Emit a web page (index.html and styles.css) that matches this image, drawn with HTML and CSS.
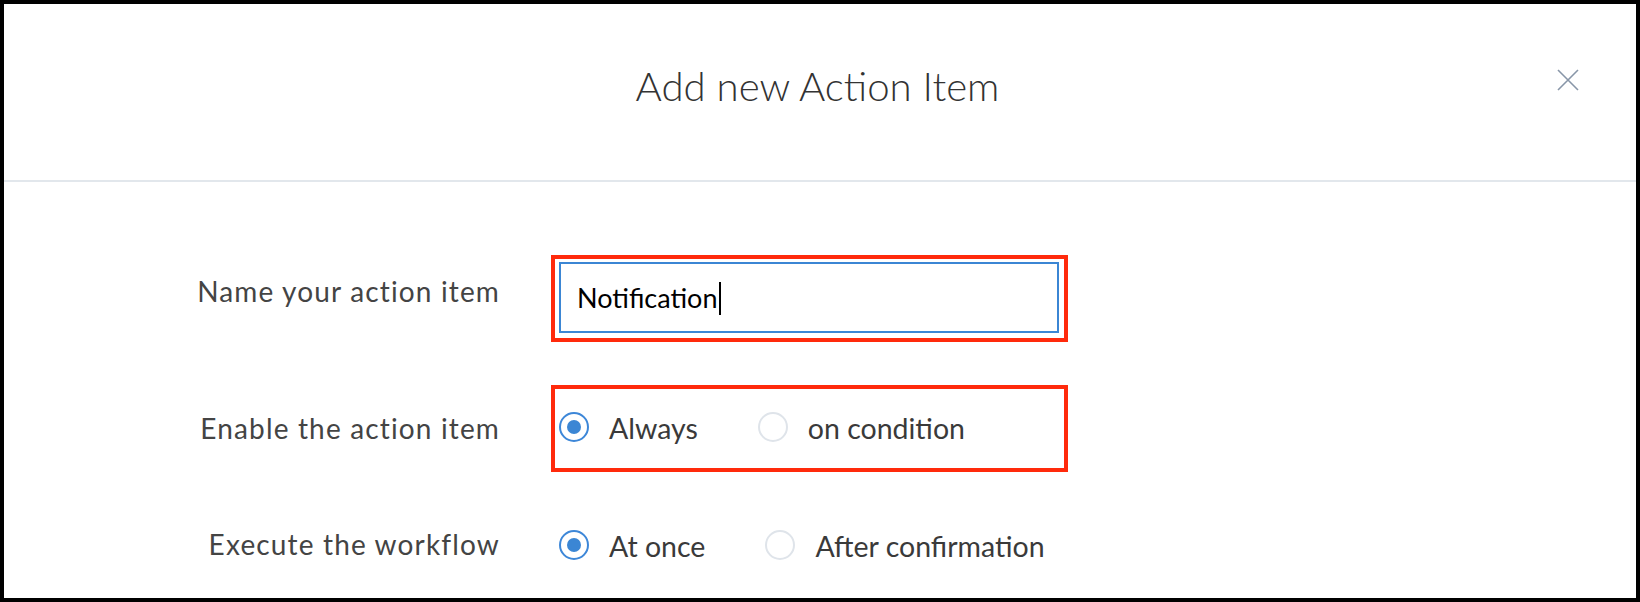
FILE: index.html
```html
<!DOCTYPE html>
<html>
<head>
<meta charset="utf-8">
<link rel="stylesheet" href="styles.css">
</head>
<body>
<div class="modal">
  <div class="header">
    <h1 class="title">Add new Action Item</h1>
    <button class="close" aria-label="Close">
      <svg width="22" height="22" viewBox="0 0 22 22"><path d="M1 1 L21 21 M21 1 L1 21" stroke="#8896a8" stroke-width="1.6" fill="none"/></svg>
    </button>
  </div>
  <div class="form">
    <div class="row row-name">
      <div class="label">Name your action item</div>
      <div class="annot annot-input">
        <div class="text-input">Notification<span class="caret"></span></div>
      </div>
    </div>
    <div class="row row-enable">
      <div class="label">Enable the action item</div>
      <div class="annot radios">
        <label class="opt"><span class="radio checked"></span><span class="opt-text">Always</span></label>
        <label class="opt"><span class="radio"></span><span class="opt-text">on condition</span></label>
      </div>
    </div>
    <div class="row row-exec">
      <div class="label">Execute the workflow</div>
      <div class="plain radios">
        <label class="opt"><span class="radio checked"></span><span class="opt-text">At once</span></label>
        <label class="opt"><span class="radio"></span><span class="opt-text">After confirmation</span></label>
      </div>
    </div>
  </div>
</div>
</body>
</html>
```
FILE: styles.css
```css
* { box-sizing: border-box; }
html, body { margin: 0; padding: 0; background: #fff; }
body { font-family: Lato, "Open Sans", sans-serif; }

.modal {
  width: 1640px;
  height: 602px;
  border: 4px solid #000;
  background: #fff;
  overflow: hidden;
}

.header {
  position: relative;
  height: 178px;
  border-bottom: 2px solid #e2e7ec;
  padding-top: 58px;
}
.title {
  margin: 0 0 0 -5px;
  text-align: center;
  font-family: Lato, sans-serif;
  font-weight: 300;
  font-size: 40.2px;
  line-height: 48px;
  color: #333;
}
.close {
  position: absolute;
  top: 65px;
  right: 57px;
  width: 22px;
  height: 22px;
  padding: 0;
  border: 0;
  background: none;
  display: block;
}
.close svg { display: block; }

.form { padding-top: 73px; }

.row {
  display: grid;
  grid-template-columns: 496px 517px;
  column-gap: 51px;
  align-items: start;
}
.row-enable { margin-top: 43px; }
.row-exec { margin-top: 31px; }

.label {
  text-align: right;
  font-size: 28px;
  line-height: 34px;
  letter-spacing: 1.15px;
  color: #444;
}
.row-name .label { margin-top: 19px; }
.row-enable .label { margin-top: 26px; }
.row-exec .label { margin-top: 24px; }

.annot,
.plain {
  width: 517px;
  height: 87px;
  border: 4px solid #ff2a0c;
}
.plain { border-color: transparent; }
.annot-input { padding: 3px 5px 5px 4px; }

.text-input {
  width: 500px;
  height: 71px;
  border: 2px solid #3b86d4;
  padding: 0 16px;
  display: flex;
  align-items: center;
  font-family: Lato, sans-serif;
  font-size: 27px;
  color: #000;
}
.caret {
  display: inline-block;
  width: 2px;
  height: 33px;
  background: #000;
  margin-left: 1px;
  margin-top: 1px;
}

.radios {
  display: flex;
  align-items: center;
  padding: 0 0 4px 4px;
}

.opt {
  display: flex;
  align-items: center;
  color: #3a3a3a;
  font-size: 28.5px;
}
.opt:first-child { margin-right: 60px; }

.opt-text { margin-top: 2.5px; line-height: 34px; }

.radio {
  width: 30px;
  height: 30px;
  border-radius: 50%;
  border: 2px solid #dfe4ea;
  margin-right: 20px;
  display: flex;
  align-items: center;
  justify-content: center;
  flex: none;
}
.radio.checked { border-color: #3d87d8; }
.radio.checked::after {
  content: "";
  width: 14px;
  height: 14px;
  border-radius: 50%;
  background: #3b86d4;
}
```
